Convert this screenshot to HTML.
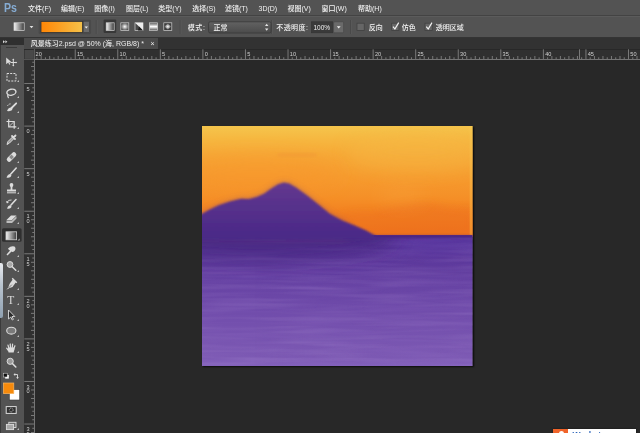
<!DOCTYPE html>
<html><head><meta charset="utf-8">
<style>
*{box-sizing:border-box;margin:0;padding:0}
html,body{width:640px;height:433px;overflow:hidden;background:#282828}
body{position:relative;will-change:transform;font-family:"Liberation Sans","Noto Sans CJK SC",sans-serif;color:#e6e6e6;font-size:7px}
svg text{font-family:"Liberation Sans","Noto Sans CJK SC",sans-serif}
.abs{position:absolute}
#menubar{left:0;top:0;width:640px;height:16px;background:#535353}
#menubar span{position:absolute;top:4.3px;font-size:7px;line-height:10px;white-space:nowrap;color:#f2f2f2;font-weight:500}
#ps{position:absolute;left:4px;top:0.5px;font-size:12px;line-height:14px;font-weight:bold;color:#86acd3;transform:scaleX(0.88);transform-origin:0 0}
#optbg{left:0;top:16px;width:640px;height:20.8px;background:#535353}
#optsh{left:0;top:36.8px;width:640px;height:1.7px;background:linear-gradient(#3c3c3c,#2c2c2c)}
.ol{position:absolute;font-size:7px;line-height:10px;top:23px;white-space:nowrap;color:#f2f2f2;font-weight:500}
#tabbar{left:24px;top:38.4px;width:616px;height:11px;background:#323232}
#tab{left:24.3px;top:38.4px;width:133.8px;height:10.9px;background:#4b4b4b;font-size:7px;line-height:11.6px;padding-left:6.4px;white-space:nowrap;color:#ececec;font-weight:500}
#tools{left:0;top:44.6px;width:23.5px;height:390px;background:#535353;border-left:0.8px solid #3a3a3a}
#toolhead{left:0;top:38px;width:23.5px;height:7.2px;background:#2f2f2f}
#grip{left:6px;top:47.3px;width:11px;height:1.2px;background:#3a3a3a}
#strip{left:0;top:262.5px;width:2.7px;height:55.5px;background:linear-gradient(#e8eaee,#b9c4cf 40%,#8fa0b0);border-radius:0 2px 2px 0}
#paint{left:201.9px;top:125.9px;width:270.7px;height:240.4px;box-shadow:1px 1px 1.5px rgba(0,0,0,.7)}
#wm{left:553.2px;top:428.6px;width:83.2px;height:8px;background:#fff;overflow:hidden;font-size:8.5px;line-height:9px;color:#2d66bb;font-weight:bold;padding-left:19.3px;padding-top:2.3px;white-space:nowrap;box-shadow:0 0 2px rgba(0,0,0,.55)}
#wmo{left:553.2px;top:428.6px;width:14.8px;height:8px;background:#f0642a;overflow:hidden}
#wmo i{position:absolute;left:5.6px;top:2.6px;width:5.4px;height:5.4px;border-radius:3px;background:#fff}
</style></head><body>
<div id="menubar" class="abs">
<div id="ps">Ps</div>
<span style="left:28.1px">文件(F)</span>
<span style="left:60.9px">编辑(E)</span>
<span style="left:94.3px">图像(I)</span>
<span style="left:125.9px">图层(L)</span>
<span style="left:158.3px">类型(Y)</span>
<span style="left:192.2px">选择(S)</span>
<span style="left:224.9px">滤镜(T)</span>
<span style="left:258.5px">3D(D)</span>
<span style="left:287.5px">视图(V)</span>
<span style="left:321.5px">窗口(W)</span>
<span style="left:358px">帮助(H)</span>
</div>
<div id="optbg" class="abs"></div><div class="abs" style="left:0;top:15.2px;width:640px;height:1.2px;background:#434343"></div><div class="abs" style="left:0;top:16.4px;width:640px;height:1px;background:#5b5b5b"></div><div id="optsh" class="abs"></div>
<svg class="abs" style="left:0;top:16px" width="640" height="22" viewBox="0 16 640 22">
<defs>
<linearGradient id="g1" x1="0" y1="0" x2="1" y2="0"><stop offset="0" stop-color="#f6f6f6"/><stop offset="1" stop-color="#3a3a3a"/></linearGradient>
<linearGradient id="g2" x1="0" y1="0" x2="1" y2="0"><stop offset="0" stop-color="#ff8606"/><stop offset="0.35" stop-color="#fc9a1c"/><stop offset="1" stop-color="#f5c24a"/></linearGradient>
<linearGradient id="g3" x1="0" y1="0" x2="0" y2="1"><stop offset="0" stop-color="#626262"/><stop offset="1" stop-color="#4b4b4b"/></linearGradient>
<radialGradient id="g4"><stop offset="0" stop-color="#ffffff"/><stop offset="1" stop-color="#555"/></radialGradient>
<linearGradient id="g5" x1="0" y1="0" x2="0" y2="1"><stop offset="0" stop-color="#555"/><stop offset="0.5" stop-color="#fff"/><stop offset="1" stop-color="#555"/></linearGradient>
</defs>
<rect x="14" y="22.8" width="10.2" height="7.6" fill="url(#g1)" stroke="#d8d8d8" stroke-width="0.7"/>
<path d="M29.6,26H33.4L31.5,28.2Z" fill="#e0e0e0"/>
<rect x="39" y="20" width="51.6" height="13.8" rx="1" fill="#4c4c4c" stroke="#474747" stroke-width="0.6"/>
<rect x="41" y="21.4" width="41.6" height="11" fill="url(#g2)" stroke="#333" stroke-width="0.8"/>
<rect x="83.2" y="21.2" width="6.4" height="11.4" fill="#6c6c6c" stroke="#3c3c3c" stroke-width="0.6"/>
<path d="M84.6,26.6H88L86.3,28.6Z" fill="#ececec"/>
<path d="M96.3,20V34" stroke="#444" stroke-width="0.7"/><path d="M97.1,20V34" stroke="#606060" stroke-width="0.6"/>
<path d="M180.2,20V34" stroke="#444" stroke-width="0.7"/><path d="M181.0,20V34" stroke="#606060" stroke-width="0.6"/>
<path d="M271.6,20V34" stroke="#444" stroke-width="0.7"/><path d="M272.40000000000003,20V34" stroke="#606060" stroke-width="0.6"/>
<path d="M350.6,20V34" stroke="#444" stroke-width="0.7"/><path d="M351.40000000000003,20V34" stroke="#606060" stroke-width="0.6"/>
<rect x="103.6" y="19.6" width="12.6" height="13.4" rx="1" fill="#383838"/>
<rect x="106.2" y="22.8" width="8" height="7.6" fill="url(#g1)" stroke="#d0d0d0" stroke-width="0.7"/>
<rect x="120.8" y="22.8" width="8" height="7.6" fill="url(#g4)" stroke="#d0d0d0" stroke-width="0.7"/>
<rect x="135" y="22.8" width="8" height="7.6" fill="#4a4a4a" stroke="#d0d0d0" stroke-width="0.7"/>
<path d="M135,22.8H143L139,26.6ZM143,22.8V30.4L139,26.6Z" fill="#eee"/><path d="M139,26.6L143,30.4H138Z" fill="#1e1e1e"/>
<rect x="149.6" y="22.8" width="8" height="7.6" fill="url(#g5)" stroke="#d0d0d0" stroke-width="0.7"/>
<rect x="163.8" y="22.8" width="8" height="7.6" fill="#3c3c3c" stroke="#d0d0d0" stroke-width="0.7"/>
<path d="M167.8,23.4L171.2,26.6L167.8,29.8L164.4,26.6Z" fill="url(#g4)"/>
<rect x="208.6" y="21.8" width="62.4" height="11.2" rx="1.5" fill="url(#g3)" stroke="#383838" stroke-width="0.8"/>
<path d="M265,26L266.7,23.8L268.4,26ZM265,28.6L266.7,30.8L268.4,28.6Z" fill="#e6e6e6"/>
<rect x="311.4" y="21.8" width="21.4" height="11" fill="#3a3a3a" stroke="#333" stroke-width="0.6"/>
<rect x="333.6" y="21.8" width="10" height="11" rx="1" fill="#6a6a6a" stroke="#444" stroke-width="0.6"/>
<path d="M336.8,26.2H340.6L338.7,28.4Z" fill="#f0f0f0"/>
<rect x="357" y="23.2" width="7.2" height="7.2" fill="#666" stroke="#3e3e3e" stroke-width="0.7"/>
<rect x="391.7" y="23.2" width="7.2" height="7.2" fill="#666" stroke="#3e3e3e" stroke-width="0.7"/>
<rect x="425" y="23.2" width="7.2" height="7.2" fill="#666" stroke="#3e3e3e" stroke-width="0.7"/>
<path d="M393.0,26.6L394.9,29L398.7,22.6" stroke="#f2f2f2" stroke-width="1.2" fill="none"/>
<path d="M426.3,26.6L428.2,29L432,22.6" stroke="#f2f2f2" stroke-width="1.2" fill="none"/>
</svg>
<span class="ol" style="left:187.7px;letter-spacing:0.6px">模式:</span>
<span class="ol" style="left:213.5px">正常</span>
<span class="ol" style="left:276.3px;letter-spacing:0.4px">不透明度:</span>
<span class="ol" style="left:313.5px;font-size:6.5px">100%</span>
<span class="ol" style="left:368.7px">反向</span>
<span class="ol" style="left:401.8px">仿色</span>
<span class="ol" style="left:435.8px">透明区域</span>
<div id="tabbar" class="abs"></div>
<div id="tab" class="abs">风景练习2.psd @ 50% (海, RGB/8) * <span style="margin-left:4.5px">×</span></div>
<svg class="abs" style="left:0;top:49.3px" width="640" height="11" viewBox="0 0 640 11">
<rect x="24" y="0" width="616" height="10.5" fill="#303030"/>
<rect x="24.6" y="0.9" width="9" height="9" fill="#484848"/>
<rect x="24" y="0" width="616" height="0.8" fill="#272727"/>
<rect x="24" y="10" width="616" height="0.8" fill="#8a8a8a"/>
<path d="M36.92,8.3V10M41.17,7V10M45.43,8.3V10M49.68,7V10M53.94,8.3V10M58.20,7V10M62.45,8.3V10M66.71,7V10M70.96,8.3V10M75.22,0.3V10M79.48,8.3V10M83.73,7V10M87.99,8.3V10M92.24,7V10M96.50,8.3V10M100.76,7V10M105.01,8.3V10M109.27,7V10M113.52,8.3V10M117.78,0.3V10M122.04,8.3V10M126.29,7V10M130.55,8.3V10M134.80,7V10M139.06,8.3V10M143.32,7V10M147.57,8.3V10M151.83,7V10M156.08,8.3V10M160.34,0.3V10M164.60,8.3V10M168.85,7V10M173.11,8.3V10M177.36,7V10M181.62,8.3V10M185.88,7V10M190.13,8.3V10M194.39,7V10M198.64,8.3V10M202.90,0.3V10M207.16,8.3V10M211.41,7V10M215.67,8.3V10M219.92,7V10M224.18,8.3V10M228.44,7V10M232.69,8.3V10M236.95,7V10M241.20,8.3V10M245.46,0.3V10M249.72,8.3V10M253.97,7V10M258.23,8.3V10M262.48,7V10M266.74,8.3V10M271.00,7V10M275.25,8.3V10M279.51,7V10M283.76,8.3V10M288.02,0.3V10M292.28,8.3V10M296.53,7V10M300.79,8.3V10M305.04,7V10M309.30,8.3V10M313.56,7V10M317.81,8.3V10M322.07,7V10M326.32,8.3V10M330.58,0.3V10M334.84,8.3V10M339.09,7V10M343.35,8.3V10M347.60,7V10M351.86,8.3V10M356.12,7V10M360.37,8.3V10M364.63,7V10M368.88,8.3V10M373.14,0.3V10M377.40,8.3V10M381.65,7V10M385.91,8.3V10M390.16,7V10M394.42,8.3V10M398.68,7V10M402.93,8.3V10M407.19,7V10M411.44,8.3V10M415.70,0.3V10M419.96,8.3V10M424.21,7V10M428.47,8.3V10M432.72,7V10M436.98,8.3V10M441.24,7V10M445.49,8.3V10M449.75,7V10M454.00,8.3V10M458.26,0.3V10M462.52,8.3V10M466.77,7V10M471.03,8.3V10M475.28,7V10M479.54,8.3V10M483.80,7V10M488.05,8.3V10M492.31,7V10M496.56,8.3V10M500.82,0.3V10M505.08,8.3V10M509.33,7V10M513.59,8.3V10M517.84,7V10M522.10,8.3V10M526.36,7V10M530.61,8.3V10M534.87,7V10M539.12,8.3V10M543.38,0.3V10M547.64,8.3V10M551.89,7V10M556.15,8.3V10M560.40,7V10M564.66,8.3V10M568.92,7V10M573.17,8.3V10M577.43,7V10M581.68,8.3V10M585.94,0.3V10M590.20,8.3V10M594.45,7V10M598.71,8.3V10M602.96,7V10M607.22,8.3V10M611.48,7V10M615.73,8.3V10M619.99,7V10M624.24,8.3V10M628.50,0.3V10M632.76,8.3V10M637.01,7V10" stroke="#9a9a9a" stroke-width="0.7" fill="none"/>
<path d="M579.5,0.3V10" stroke="#9a9a9a" stroke-width="0.7"/>
<path d="M34.4,0V11" stroke="#777" stroke-width="0.7"/>
<text x="35.6" y="6.6" font-size="5.6" fill="#d0d0d0">20</text>
<text x="77.0" y="6.6" font-size="5.6" fill="#d0d0d0">15</text>
<text x="119.6" y="6.6" font-size="5.6" fill="#d0d0d0">10</text>
<text x="162.1" y="6.6" font-size="5.6" fill="#d0d0d0">5</text>
<text x="204.7" y="6.6" font-size="5.6" fill="#d0d0d0">0</text>
<text x="247.3" y="6.6" font-size="5.6" fill="#d0d0d0">5</text>
<text x="289.8" y="6.6" font-size="5.6" fill="#d0d0d0">10</text>
<text x="332.4" y="6.6" font-size="5.6" fill="#d0d0d0">15</text>
<text x="374.9" y="6.6" font-size="5.6" fill="#d0d0d0">20</text>
<text x="417.5" y="6.6" font-size="5.6" fill="#d0d0d0">25</text>
<text x="460.1" y="6.6" font-size="5.6" fill="#d0d0d0">30</text>
<text x="502.6" y="6.6" font-size="5.6" fill="#d0d0d0">35</text>
<text x="545.2" y="6.6" font-size="5.6" fill="#d0d0d0">40</text>
<text x="587.7" y="6.6" font-size="5.6" fill="#d0d0d0">45</text>
<text x="630.3" y="6.6" font-size="5.6" fill="#d0d0d0">50</text>
</svg>
<svg class="abs" style="left:24.3px;top:49.3px" width="11" height="384" viewBox="0 0 11 384">
<rect x="0" y="10.5" width="10.5" height="374" fill="#303030"/>
<rect x="10" y="10.5" width="0.8" height="374" fill="#8a8a8a"/>
<path d="M8.3,13.26H10M7,17.52H10M8.3,21.77H10M7,26.03H10M8.3,30.28H10M0.3,34.54H10M8.3,38.80H10M7,43.05H10M8.3,47.31H10M7,51.56H10M8.3,55.82H10M7,60.08H10M8.3,64.33H10M7,68.59H10M8.3,72.84H10M0.3,77.10H10M8.3,81.36H10M7,85.61H10M8.3,89.87H10M7,94.12H10M8.3,98.38H10M7,102.64H10M8.3,106.89H10M7,111.15H10M8.3,115.40H10M0.3,119.66H10M8.3,123.92H10M7,128.17H10M8.3,132.43H10M7,136.68H10M8.3,140.94H10M7,145.20H10M8.3,149.45H10M7,153.71H10M8.3,157.96H10M0.3,162.22H10M8.3,166.48H10M7,170.73H10M8.3,174.99H10M7,179.24H10M8.3,183.50H10M7,187.76H10M8.3,192.01H10M7,196.27H10M8.3,200.52H10M0.3,204.78H10M8.3,209.04H10M7,213.29H10M8.3,217.55H10M7,221.80H10M8.3,226.06H10M7,230.32H10M8.3,234.57H10M7,238.83H10M8.3,243.08H10M0.3,247.34H10M8.3,251.60H10M7,255.85H10M8.3,260.11H10M7,264.36H10M8.3,268.62H10M7,272.88H10M8.3,277.13H10M7,281.39H10M8.3,285.64H10M0.3,289.90H10M8.3,294.16H10M7,298.41H10M8.3,302.67H10M7,306.92H10M8.3,311.18H10M7,315.44H10M8.3,319.69H10M7,323.95H10M8.3,328.20H10M0.3,332.46H10M8.3,336.72H10M7,340.97H10M8.3,345.23H10M7,349.48H10M8.3,353.74H10M7,358.00H10M8.3,362.25H10M7,366.51H10M8.3,370.76H10M0.3,375.02H10M8.3,379.28H10M7,383.53H10" stroke="#9a9a9a" stroke-width="0.7" fill="none"/>
<text x="2.6" y="41.5" font-size="5.6" fill="#d0d0d0">5</text>
<text x="2.6" y="84.1" font-size="5.6" fill="#d0d0d0">0</text>
<text x="2.6" y="126.7" font-size="5.6" fill="#d0d0d0">5</text>
<text x="2.6" y="169.2" font-size="5.6" fill="#d0d0d0">1</text>
<text x="2.6" y="174.0" font-size="5.6" fill="#d0d0d0">0</text>
<text x="2.6" y="211.8" font-size="5.6" fill="#d0d0d0">1</text>
<text x="2.6" y="216.6" font-size="5.6" fill="#d0d0d0">5</text>
<text x="2.6" y="254.3" font-size="5.6" fill="#d0d0d0">2</text>
<text x="2.6" y="259.1" font-size="5.6" fill="#d0d0d0">0</text>
<text x="2.6" y="296.9" font-size="5.6" fill="#d0d0d0">2</text>
<text x="2.6" y="301.7" font-size="5.6" fill="#d0d0d0">5</text>
<text x="2.6" y="339.5" font-size="5.6" fill="#d0d0d0">3</text>
<text x="2.6" y="344.3" font-size="5.6" fill="#d0d0d0">0</text>
<text x="2.6" y="382.0" font-size="5.6" fill="#d0d0d0">3</text>
<text x="2.6" y="386.8" font-size="5.6" fill="#d0d0d0">5</text>
</svg>
<div id="tools" class="abs"></div>
<div id="toolhead" class="abs"></div>
<svg class="abs" style="left:3px;top:39.5px" width="5" height="4" viewBox="0 0 5 4"><path d="M0,0.3L2,1.8L0,3.3ZM2.4,0.3L4.4,1.8L2.4,3.3Z" fill="#d8d8d8"/></svg>
<div id="grip" class="abs"></div>
<svg class="abs" style="left:0;top:0" width="24" height="433" viewBox="0 0 24 433">
<path d="M19,80V82H17Z" fill="#bdbdbd"/>
<path d="M19,96V98H17Z" fill="#bdbdbd"/>
<path d="M19,111V113H17Z" fill="#bdbdbd"/>
<path d="M19,127V129H17Z" fill="#bdbdbd"/>
<path d="M19,143V145H17Z" fill="#bdbdbd"/>
<path d="M19,161V163H17Z" fill="#bdbdbd"/>
<path d="M19,176V178H17Z" fill="#bdbdbd"/>
<path d="M19,192V194H17Z" fill="#bdbdbd"/>
<path d="M19,207V209H17Z" fill="#bdbdbd"/>
<path d="M19,222V224H17Z" fill="#bdbdbd"/>
<path d="M19,255V257H17Z" fill="#bdbdbd"/>
<path d="M19,270V272H17Z" fill="#bdbdbd"/>
<path d="M19,288V290H17Z" fill="#bdbdbd"/>
<path d="M19,303V305H17Z" fill="#bdbdbd"/>
<path d="M19,319V321H17Z" fill="#bdbdbd"/>
<path d="M19,335V337H17Z" fill="#bdbdbd"/>
<path d="M19,351V353H17Z" fill="#bdbdbd"/>
<path d="M6.2,57.5V64.2L8.2,62.6L9.3,64.8L10.3,64.3L9.3,62.2H11.6Z" fill="#dcdcdc"/>
<path d="M13.3,59.5V65.5M10.5,62.5H16.3" stroke="#dcdcdc" stroke-width="1" fill="none"/>
<path d="M13.3,58.6L12.2,60H14.4ZM13.3,66.4L12.2,65H14.4ZM17.2,62.5L15.8,61.4V63.6Z" fill="#dcdcdc"/>
<rect x="7" y="73.5" width="9" height="7.5" fill="none" stroke="#dcdcdc" stroke-width="1" stroke-dasharray="2 1.2"/>
<ellipse cx="11.4" cy="92.2" rx="4.6" ry="3" fill="none" stroke="#dcdcdc" stroke-width="1.4" transform="rotate(-12 11.4 92.2)"/>
<path d="M8,94.5Q7,96 8.6,98" stroke="#dcdcdc" stroke-width="1.3" fill="none"/>
<path d="M16.2,103.3L11.5,108" stroke="#dcdcdc" stroke-width="1.8" fill="none" stroke-linecap="round"/>
<path d="M7,111Q8.5,107 12.3,107.6Q13.4,111.8 7,111Z" fill="#dcdcdc"/>
<path d="M7.5,106Q8.5,103.5 11.5,104" stroke="#dcdcdc" stroke-width="0.9" fill="none" stroke-dasharray="1.5 1"/>
<path d="M8.7,119.3V126.8H16.3M6.5,121.5H14.2V128.8" stroke="#dcdcdc" stroke-width="1.2" fill="none"/>
<path d="M9.2,126.3L13.7,122" stroke="#dcdcdc" stroke-width="0.8" fill="none"/>
<path d="M7,144.5L8,141.5L12.5,137L14,138.5L9.5,143Z" fill="#9a9a9a" stroke="#dcdcdc" stroke-width="1"/>
<path d="M12,136L15,139M13.5,137.5L15.5,135.5" stroke="#dcdcdc" stroke-width="1.8" fill="none" stroke-linecap="round"/>
<rect x="5.8" y="154.6" width="11.5" height="4.8" rx="2.4" fill="#dcdcdc" transform="rotate(-45 11.5 157)"/>
<rect x="9.8" y="155.3" width="3.4" height="3.4" fill="#8a8a8a" transform="rotate(-45 11.5 157)"/>
<path d="M16.2,168L10.8,174" stroke="#dcdcdc" stroke-width="1.6" fill="none" stroke-linecap="round"/>
<path d="M6.5,177.5Q8,173.5 10.6,174Q12.3,175.5 10.5,177Q8.5,178.3 6.5,177.5Z" fill="#dcdcdc"/>
<circle cx="11.5" cy="185" r="1.9" fill="#dcdcdc"/>
<path d="M10.6,186H12.4V189.4H16V191.4H7V189.4H10.6Z" fill="#dcdcdc"/>
<rect x="7" y="192.3" width="9" height="1" fill="#dcdcdc"/>
<path d="M16,199.5L11,205" stroke="#dcdcdc" stroke-width="1.6" fill="none" stroke-linecap="round"/>
<path d="M7,208.5Q8.2,204.8 10.8,205.2Q12.4,206.6 10.7,208Q9,209.2 7,208.5Z" fill="#dcdcdc"/>
<path d="M7,202.5Q8,199.5 11.5,200" stroke="#dcdcdc" stroke-width="0.9" fill="none"/>
<path d="M6,201L7,203.5L9,202Z" fill="#dcdcdc"/>
<path d="M6.5,220L11,215.5H16.5L12,220Z" fill="#dcdcdc"/>
<path d="M6.5,220.6H12L16.5,216.2V218.6L12,223H6.5Z" fill="#bcbcbc"/>
<rect x="2" y="228.3" width="19.6" height="13.4" rx="1.5" fill="#2f2f2f"/>
<rect x="6" y="231.8" width="10.6" height="8" fill="url(#tg)" stroke="#cfcfcf" stroke-width="0.8"/>
<path d="M19.6,238.5V240.5H17.6Z" fill="#bdbdbd"/>
<path d="M8,248.5Q11,245.5 14.5,246.5Q16.5,248.5 14.5,251Q12.5,252.5 11.5,251.5L7.5,255.5L6.5,254.5L10,250.5Q8.5,250 8,248.5Z" fill="#dcdcdc"/>
<circle cx="10" cy="264.5" r="2.9" fill="#a8a8a8" stroke="#dcdcdc" stroke-width="1"/>
<path d="M12.2,266.7L15.8,270.3" stroke="#dcdcdc" stroke-width="1.5" fill="none" stroke-linecap="round"/>
<path d="M13,279L16,282L12.5,287L8,288.5L9.5,284Z" fill="#dcdcdc"/>
<path d="M8,288.5L11.8,284.7" stroke="#555" stroke-width="0.7"/>
<path d="M12.2,278.2L16.8,282.8" stroke="#dcdcdc" stroke-width="1.3"/>
<path d="M7.2,289.3L8.6,287.9" stroke="#dcdcdc" stroke-width="1"/>
<text x="7.2" y="303.6" style="font-family:Liberation Serif,serif" font-size="11.5" fill="#dcdcdc">T</text>
<path d="M8.5,310V319L10.8,317L12.2,320L13.4,319.4L12,316.5H14.8Z" fill="#2b2b2b" stroke="#dcdcdc" stroke-width="0.9"/>
<ellipse cx="11.3" cy="330.7" rx="4.6" ry="3.4" fill="#7a7a7a" stroke="#dcdcdc" stroke-width="1.1"/>
<path d="M8.6,352.4L7.6,349.6L8.6,347.6H14L14.6,349L13.6,352.4Z" fill="#dcdcdc"/>
<path d="M8.9,348.5L8,345.2M10.5,348L10.2,344M12.2,348L12.6,344.2M13.8,348.8L14.9,345.8M8.4,350.4L6.7,348.2" stroke="#dcdcdc" stroke-width="1.25" fill="none" stroke-linecap="round"/>
<circle cx="10.2" cy="361.3" r="3.1" fill="#9a9a9a" stroke="#dcdcdc" stroke-width="1"/>
<path d="M12.6,363.7L15.8,367" stroke="#dcdcdc" stroke-width="1.6" fill="none" stroke-linecap="round"/>
<rect x="5.2" y="375" width="3.6" height="3.6" fill="#fff"/>
<rect x="3.4" y="373.2" width="3.8" height="3.8" fill="#111" stroke="#ddd" stroke-width="0.5"/>
<path d="M14.5,374.5H17.5V378" stroke="#dcdcdc" stroke-width="0.9" fill="none"/>
<path d="M13.5,374.5L15.2,373.1V375.9ZM17.5,379L16.1,377.3H18.9Z" fill="#dcdcdc"/>
<rect x="9.3" y="389.6" width="10.4" height="10.4" fill="#ffffff" stroke="#3a3a3a" stroke-width="0.6"/>
<rect x="3.4" y="383" width="10.4" height="10.6" fill="#f68a0c" stroke="#f9b560" stroke-width="0.7"/>
<rect x="6.2" y="406.6" width="10" height="6.8" fill="#303030" stroke="#dcdcdc" stroke-width="1"/>
<circle cx="11.2" cy="410" r="1.9" fill="none" stroke="#dcdcdc" stroke-width="0.7" stroke-dasharray="1 0.7"/>
<rect x="8.8" y="422.3" width="7.2" height="5.2" fill="#6a6a6a" stroke="#dcdcdc" stroke-width="0.9"/>
<rect x="6.4" y="424.4" width="7.2" height="5.2" fill="#a8a8a8" stroke="#dcdcdc" stroke-width="0.9"/>
<path d="M19,428V430H17Z" fill="#bdbdbd"/>
<defs><linearGradient id="tg" x1="0" y1="0" x2="1" y2="0"><stop offset="0" stop-color="#f4f4f4"/><stop offset="1" stop-color="#3c3c3c"/></linearGradient></defs>
</svg>
<div id="strip" class="abs"></div>
<svg id="paint" class="abs" width="270.7" height="240.4" viewBox="0 0 271 240" preserveAspectRatio="none">
<defs>
<linearGradient id="sky" x1="0" y1="0" x2="0" y2="1">
<stop offset="0" stop-color="#f5c54c"/>
<stop offset="0.12" stop-color="#f6b740"/>
<stop offset="0.26" stop-color="#f6a937"/>
<stop offset="0.45" stop-color="#f69c2f"/>
<stop offset="0.65" stop-color="#f58f27"/>
<stop offset="0.8" stop-color="#f27f1f"/>
<stop offset="1" stop-color="#ef6f18"/>
</linearGradient>
<linearGradient id="sky2" x1="0" y1="0" x2="0" y2="1">
<stop offset="0" stop-color="#f6c850"/>
<stop offset="1" stop-color="#f59a30"/>
</linearGradient>
<linearGradient id="sea" x1="0" y1="0" x2="0" y2="1">
<stop offset="0" stop-color="#522e90"/>
<stop offset="0.12" stop-color="#593598"/>
<stop offset="0.35" stop-color="#6642a3"/>
<stop offset="0.65" stop-color="#734fad"/>
<stop offset="0.93" stop-color="#7c59b3"/>
<stop offset="1" stop-color="#8361bc"/>
</linearGradient>
<linearGradient id="mt" gradientUnits="userSpaceOnUse" x1="0" y1="57" x2="0" y2="113">
<stop offset="0" stop-color="#63398f"/>
<stop offset="0.35" stop-color="#59328c"/>
<stop offset="0.75" stop-color="#4f2c89"/>
<stop offset="1" stop-color="#4a2987"/>
</linearGradient>
<radialGradient id="glow" cx="0.85" cy="1" r="0.6">
<stop offset="0" stop-color="#ec6a1c" stop-opacity="0.7"/>
<stop offset="1" stop-color="#ec6a1c" stop-opacity="0"/>
</radialGradient>
<filter id="b1" x="-5%" y="-10%" width="110%" height="120%"><feGaussianBlur stdDeviation="1.1"/></filter>
<filter id="b3" x="-10%" y="-30%" width="120%" height="160%"><feGaussianBlur stdDeviation="3.5"/></filter>
<filter id="b6" x="-20%" y="-100%" width="140%" height="300%"><feGaussianBlur stdDeviation="9"/></filter>
<filter id="tx" x="0" y="0" width="100%" height="100%"><feTurbulence type="fractalNoise" baseFrequency="0.012 0.22" numOctaves="2" seed="7" result="n"/><feColorMatrix in="n" type="matrix" values="0 0 0 0 0.35  0 0 0 0 0.2  0 0 0 0 0.62  1.6 0 0 0 -0.62"/></filter>
<filter id="tx2" x="0" y="0" width="100%" height="100%"><feTurbulence type="fractalNoise" baseFrequency="0.012 0.22" numOctaves="2" seed="23" result="n"/><feColorMatrix in="n" type="matrix" values="0 0 0 0 0.6  0 0 0 0 0.45  0 0 0 0 0.8  1.6 0 0 0 -0.66"/></filter>
<clipPath id="cp"><rect width="271" height="240"/></clipPath>
<clipPath id="cs"><rect y="110" width="271" height="130"/></clipPath>
</defs>
<g clip-path="url(#cp)">
<rect width="271" height="111" fill="url(#sky)"/>
<rect x="100" y="50" width="171" height="61" fill="url(#glow)" opacity="0.6"/>
<ellipse cx="55" cy="48" rx="85" ry="20" fill="#f8942a" opacity="0.4" filter="url(#b6)"/>
<ellipse cx="215" cy="26" rx="70" ry="20" fill="#f6b946" opacity="0.4" filter="url(#b6)"/>
<path d="M120,111 L132,92 Q150,84 170,86 Q190,80 205,78 Q225,74 240,80 Q255,84 271,82 L271,111 Z" fill="#ee7420" opacity="0.45" filter="url(#b3)"/>
<ellipse cx="200" cy="68" rx="24" ry="10" fill="#f7a540" opacity="0.3" filter="url(#b6)"/>
<rect x="75" y="27" width="40" height="4" rx="2" fill="#f29a34" opacity="0.5" filter="url(#b1)"/>
<rect x="268" y="0" width="3" height="110" fill="url(#sky2)" opacity="0.7"/>
<rect y="109" width="271" height="131" fill="url(#sea)"/>
<rect y="112" width="271" height="128" filter="url(#tx)" opacity="0.2"/><rect y="112" width="271" height="128" filter="url(#tx2)" opacity="0.16"/>
<g clip-path="url(#cs)"><ellipse cx="240" cy="114" rx="60" ry="9" fill="#6242b2" opacity="0.55" filter="url(#b6)"/><ellipse cx="60" cy="108" rx="135" ry="26" fill="#45267f" opacity="0.7" filter="url(#b6)"/></g>
<path d="M-8,91 L0,87.5 L8.3,83 L16.6,79 L27.7,75.4 L38.8,72.6 L47.1,72.8 L55.4,70.7 L62.4,67.3 L69.3,62.4 L76.2,58.2 L81.8,56.5 L87.3,57.4 L94.2,61.5 L105.3,69.3 L116.4,78.2 L128,87.5 L140,94 L146,97 L146,113 L-8,113 Z" fill="#7a3f7c" opacity="0.4" filter="url(#b3)"/>
<path d="M-8,91 L0,87.5 L8.3,83 L16.6,79 L27.7,75.4 L38.8,72.6 L47.1,72.8 L55.4,70.7 L62.4,67.3 L69.3,62.4 L76.2,58.2 L81.8,56.5 L87.3,57.4 L94.2,61.5 L105.3,69.3 L116.4,78.2 L128,87.5 L140,94 L152.6,99 L164,104 L174,109.5 L271,109.6 L271,111.5 L174,113 L-8,114 Z" fill="url(#mt)" filter="url(#b1)"/>
<rect x="172" y="109.2" width="99" height="1.1" fill="#45207c" opacity="0.7"/>
</g>
</svg>
<div id="wm" class="abs">Workstream.cn</div>
<div id="wmo" class="abs"><i></i></div>
</body></html>
